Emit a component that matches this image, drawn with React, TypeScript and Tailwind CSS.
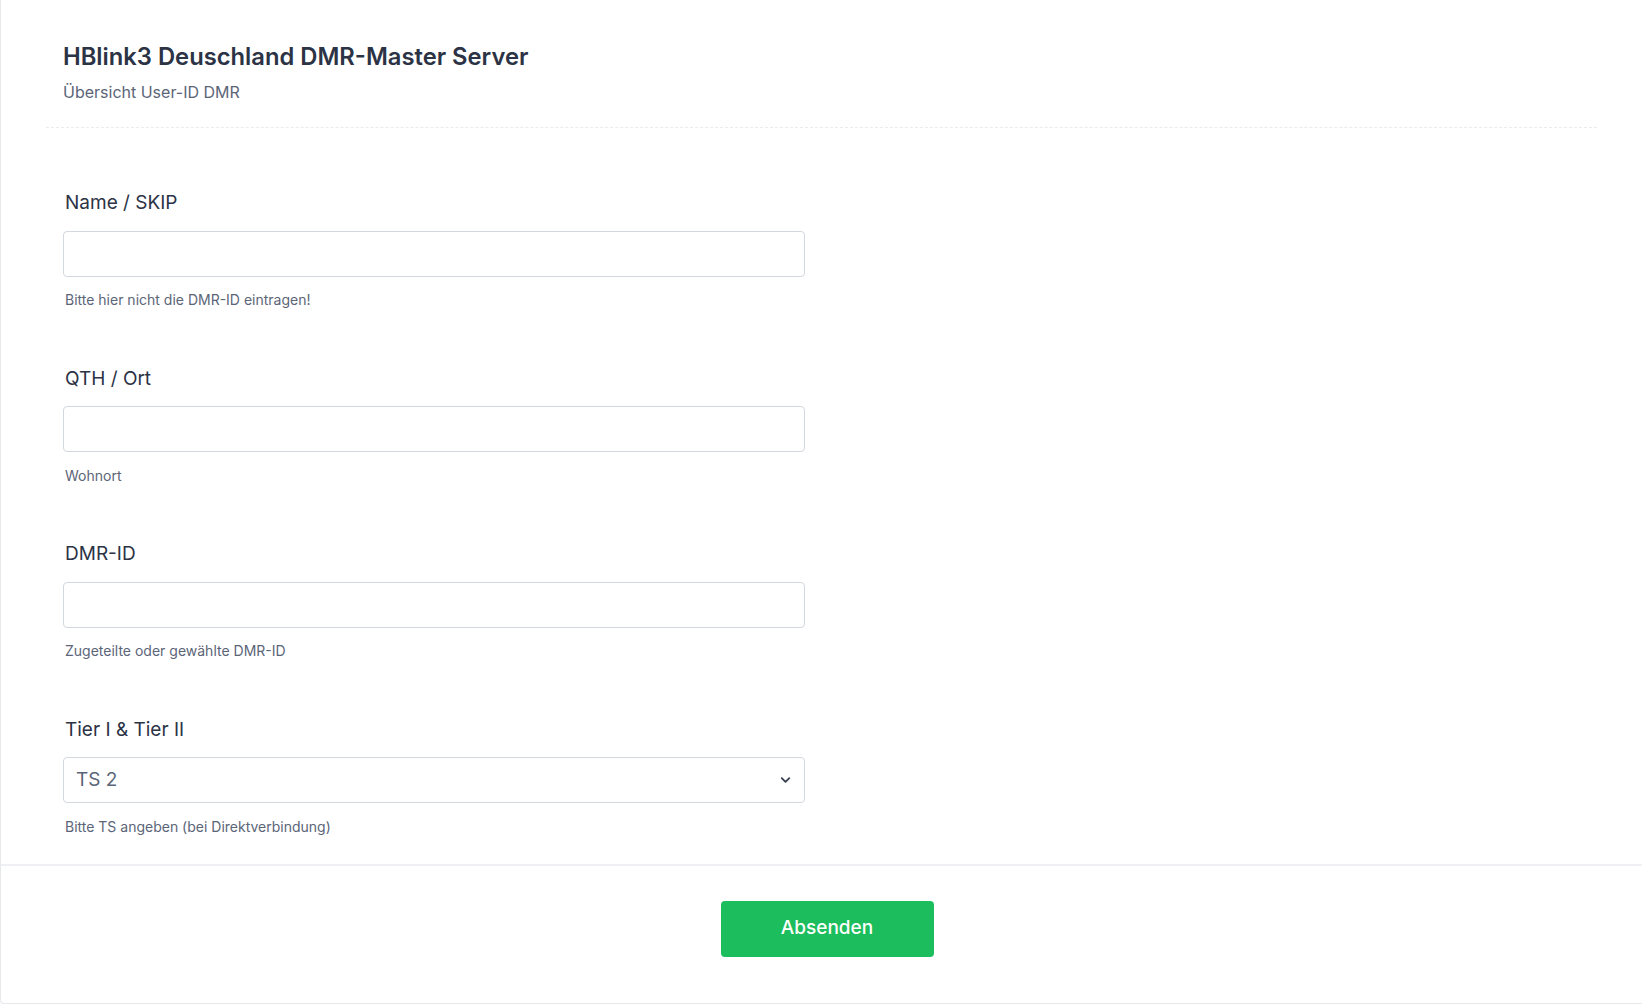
import React, { useState } from 'react';
import { ChevronDown } from 'lucide-react';

interface Field {
  id: string;
  label: string;
  help: string;
}

const fields: Field[] = [
  { id: 'name', label: 'Name / SKIP', help: 'Bitte hier nicht die DMR-ID eintragen!' },
  { id: 'qth', label: 'QTH / Ort', help: 'Wohnort' },
  { id: 'dmrid', label: 'DMR-ID', help: 'Zugeteilte oder gewählte DMR-ID' },
];

const App: React.FC = () => {
  const [values, setValues] = useState<Record<string, string>>({});
  const [ts, setTs] = useState('2');

  return (
    <div
      className="min-h-screen bg-white"
      style={{ fontFamily: 'Inter, "Noto Sans", sans-serif' }}
    >
      <div className="border-l border-b border-[#e6e8ec] rounded-bl-sm">
        {/* header */}
        <div className="mx-[45px] pt-[41px] pb-[23px] pl-[17px] border-b border-dashed border-[#e9ebef]">
          <h1 className="text-[23.75px] leading-8 font-semibold text-[#2b3345]">
            HBlink3 Deuschland DMR-Master Server
          </h1>
          <p className="mt-[7px] text-base leading-6 text-[#5b6578]">Übersicht User-ID DMR</p>
        </div>

        {/* form */}
        <form className="pl-[62px] pt-[61px] pb-[27.5px]">
          {fields.map((f) => (
            <div key={f.id} className="mb-[54.5px]">
              <label htmlFor={f.id} className="block pl-[2px] text-[19px] leading-7 font-normal text-[#2b3345]">
                {f.label}
              </label>
              <input
                id={f.id}
                type="text"
                value={values[f.id] || ''}
                onChange={(e) => setValues({ ...values, [f.id]: e.target.value })}
                className="mt-[13.5px] block w-[742px] h-[46px] rounded border border-[#d3d7de] bg-white px-3 text-lg text-[#2b3345] outline-none"
              />
              <p className="mt-[13.5px] pl-[2px] text-sm leading-5 text-[#5b6578]">{f.help}</p>
            </div>
          ))}

          <div>
            <label htmlFor="tier" className="block pl-[2px] text-[19px] leading-7 font-normal text-[#2b3345]">
              Tier I &amp; Tier II
            </label>
            <div className="relative mt-[13.5px] w-[742px]">
              <select
                id="tier"
                value={ts}
                onChange={(e) => setTs(e.target.value)}
                className="block w-full h-[46px] appearance-none rounded border border-[#d3d7de] bg-white pl-[12px] pr-10 text-[19px] text-[#5b6578] outline-none"
              >
                <option value="1">TS 1</option>
                <option value="2">TS 2</option>
              </select>
              <ChevronDown
                className="pointer-events-none absolute right-[12px] top-1/2 -translate-y-1/2 w-[15px] h-[15px] text-[#3b4252]"
                strokeWidth={3}
              />
            </div>
            <p className="mt-[13.5px] pl-[2px] text-sm leading-5 text-[#5b6578]">
              Bitte TS angeben (bei Direktverbindung)
            </p>
          </div>
        </form>

        {/* footer */}
        <div className="border-t-2 border-[#eef0f3] flex justify-center pt-[34.5px] pb-[46.5px]">
          <button
            type="button"
            className="ml-[11px] w-[213px] h-[56px] rounded bg-[#1bbd5c] text-white text-[19px] font-medium"
          >
            Absenden
          </button>
        </div>
      </div>
    </div>
  );
};

export default App;
